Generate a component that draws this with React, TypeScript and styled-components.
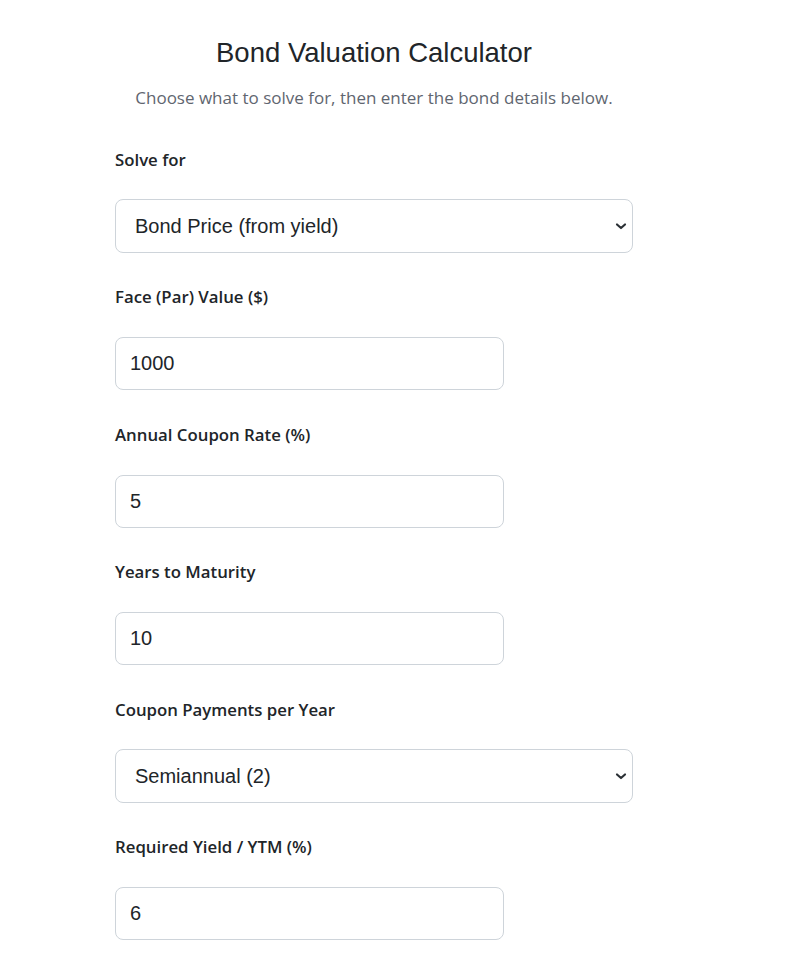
import * as React from 'react'
import styled, { createGlobalStyle } from 'styled-components'

const GlobalStyle = createGlobalStyle`
  body {
    margin: 0;
    background: #ffffff;
    font-family: 'Open Sans', 'Noto Sans', sans-serif;
    color: #212529;
  }
`

const Page = styled.main`
  width: 518px;
  margin: 0 0 0 115px;
  padding-top: 36px;
`

const Title = styled.h1`
  margin: 0;
  text-align: center;
  font-family: 'Liberation Sans', Arial, sans-serif;
  font-weight: 400;
  font-size: 27.5px;
  line-height: 34px;
  color: #212529;
`

const Subtitle = styled.p`
  margin: 16px 0 0;
  text-align: center;
  font-size: 17px;
  line-height: 24px;
  color: #5f6670;
`

const Form = styled.form`
  display: flex;
  flex-direction: column;
  margin-top: 38px;
`

const Field = styled.div<{ $gap: number }>`
  display: flex;
  flex-direction: column;
  gap: ${(p) => p.$gap}px;
  margin-bottom: 32.4px;
`

const Label = styled.label`
  font-size: 16.8px;
  font-weight: 600;
  line-height: 24px;
  color: #212529;
`

const controlBase = `
  box-sizing: border-box;
  border: 1px solid #ced4da;
  border-radius: 8px;
  background: #fff;
  font-family: 'Liberation Sans', Arial, sans-serif;
  font-size: 20px;
  color: #212529;
  outline: none;
`

const Input = styled.input`
  ${controlBase}
  width: 75%;
  height: 53px;
  padding: 0 14px;
`

const SelectWrap = styled.div`
  position: relative;
  width: 100%;
`

const Select = styled.select`
  ${controlBase}
  appearance: none;
  -webkit-appearance: none;
  width: 100%;
  height: 54px;
  padding: 0 40px 0 19px;
`

const Chevron = styled.svg`
  position: absolute;
  right: 6px;
  top: 50%;
  width: 12px;
  height: 12px;
  transform: translateY(-50%);
  pointer-events: none;
`

type Opt = { value: string; label: string }

function SelectField({ id, label, options, value }: { id: string; label: string; options: Opt[]; value: string }) {
  return (
    <Field $gap={27}>
      <Label htmlFor={id}>{label}</Label>
      <SelectWrap>
        <Select id={id} defaultValue={value}>
          {options.map((o) => (
            <option key={o.value} value={o.value}>
              {o.label}
            </option>
          ))}
        </Select>
        <Chevron viewBox="0 0 12 12">
          <path d="M2 4.5l4 3.5 4-3.5" fill="none" stroke="#2b3035" strokeWidth="2.2" strokeLinecap="round" strokeLinejoin="round" />
        </Chevron>
      </SelectWrap>
    </Field>
  )
}

function NumberField({ id, label, value }: { id: string; label: string; value: string }) {
  return (
    <Field $gap={28}>
      <Label htmlFor={id}>{label}</Label>
      <Input id={id} type="text" defaultValue={value} />
    </Field>
  )
}

export default function App() {
  return (
    <>
      <GlobalStyle />
      <Page>
        <Title>Bond Valuation Calculator</Title>
        <Subtitle>Choose what to solve for, then enter the bond details below.</Subtitle>
        <Form onSubmit={(e) => e.preventDefault()}>
          <SelectField
            id="solve"
            label="Solve for"
            value="price"
            options={[
              { value: 'price', label: 'Bond Price (from yield)' },
              { value: 'ytm', label: 'Yield to Maturity (from price)' },
            ]}
          />
          <NumberField id="face" label="Face (Par) Value ($)" value="1000" />
          <NumberField id="coupon" label="Annual Coupon Rate (%)" value="5" />
          <NumberField id="years" label="Years to Maturity" value="10" />
          <SelectField
            id="freq"
            label="Coupon Payments per Year"
            value="2"
            options={[
              { value: '1', label: 'Annual (1)' },
              { value: '2', label: 'Semiannual (2)' },
              { value: '4', label: 'Quarterly (4)' },
              { value: '12', label: 'Monthly (12)' },
            ]}
          />
          <NumberField id="yield" label="Required Yield / YTM (%)" value="6" />
        </Form>
      </Page>
    </>
  )
}
